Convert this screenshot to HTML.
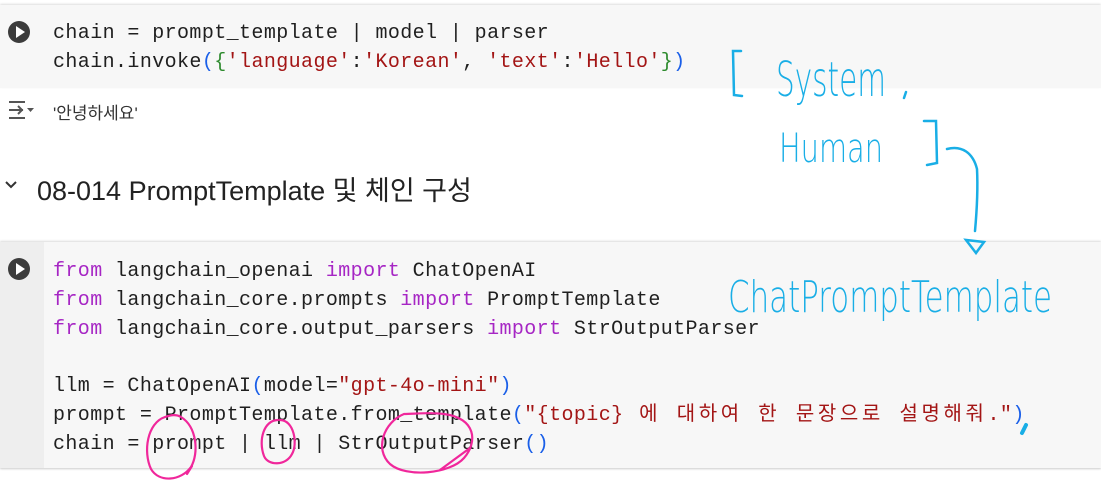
<!DOCTYPE html>
<html><head><meta charset="utf-8"><style>
body{margin:0;width:1101px;height:503px;background:#fff;position:relative;overflow:hidden;font-family:"Liberation Sans","Noto Sans CJK KR",sans-serif}
.cell{position:absolute;left:0;width:1101px;background:#f7f7f7}
.gut{position:absolute;left:0;top:0;bottom:0;width:44px;background:#eeeeee}
.code{position:absolute;left:53px;font-family:"Liberation Mono","Noto Sans CJK KR",monospace;font-size:20px;letter-spacing:0.4px;line-height:28.8px;color:#1f1f1f;white-space:pre}
.k{color:#a626c4}.s{color:#a31515}.b{color:#1a5fe8}.g{color:#2e8b2e}
.kr{letter-spacing:3.6px}
.run{position:absolute;left:8px;width:22px;height:22px;border-radius:50%;background:#3c3c3c}
.run:after{content:"";position:absolute;left:8px;top:5px;border-left:9px solid #fff;border-top:6px solid transparent;border-bottom:6px solid transparent}
</style></head><body>
<div class="cell" style="top:5px;height:83px;box-shadow:0 -1px 2px #ddd"></div>
<div class="run" style="top:21px"></div>
<div class="code" style="top:20px">chain = prompt_template | model | parser
chain.invoke<span class="b">(</span><span class="g">{</span><span class="s">'language'</span>:<span class="s">'Korean'</span>, <span class="s">'text'</span>:<span class="s">'Hello'</span><span class="g">}</span><span class="b">)</span></div>

<svg style="position:absolute;left:7px;top:99px" width="28" height="22" viewBox="0 0 28 22"><g stroke="#555" stroke-width="2" fill="none"><path d="M2 3h16M2 19h16M2 11h14M11 7l4 4-4 4"/></g><path d="M20 9h7l-3.5 4z" fill="#555"/></svg>
<div style="position:absolute;left:53px;top:99px;font-size:17px;color:#333;font-family:'Liberation Sans','Noto Sans CJK KR',sans-serif">'안녕하세요'</div>

<svg style="position:absolute;left:4px;top:179px" width="16" height="12"><path d="M2 3l5 5 5-5" stroke="#333" stroke-width="2" fill="none"/></svg>
<div style="position:absolute;left:37px;top:169px;font-size:27px;color:#222">08-014 PromptTemplate 및 체인 구성</div>

<div class="cell" style="top:242px;height:226px;box-shadow:0 1px 2px #ccc,0 -1px 2px #ddd"><div class="gut"></div></div>
<div class="run" style="top:258px"></div>
<div class="code" style="top:258px"><span class="k">from</span> langchain_openai <span class="k">import</span> ChatOpenAI
<span class="k">from</span> langchain_core.prompts <span class="k">import</span> PromptTemplate
<span class="k">from</span> langchain_core.output_parsers <span class="k">import</span> StrOutputParser

llm = ChatOpenAI<span class="b">(</span>model=<span class="s">"gpt-4o-mini"</span><span class="b">)</span>
prompt = PromptTemplate.from_template<span class="b">(</span><span class="s">"{topic}<span class="kr"> 에 대하여 한 문장으로 설명해줘</span>."</span><span class="b">)</span>
chain = prompt | llm | StrOutputParser<span class="b">()</span></div>

<svg style="position:absolute;left:0;top:0" width="1101" height="503">
<g fill="none" stroke="#19aee6" stroke-width="2.5" stroke-linecap="round">
<path d="M741 51l-8 0 1 44 8 1"/>
<path d="M906 92l-2 6"/>
<path d="M924 121l12 0 1 42-10 2"/>
<path d="M947 149c15 -4 26 4 30 20 1 20 0 40-2 62"/>
<path d="M966 240l10 13 8-11z"/>
<path d="M1022 433l4-8" stroke-width="4"/>
</g>
<g fill="#19aee6" font-family="DejaVu Sans,sans-serif" font-weight="200">
<text x="776" y="96" font-size="44" textLength="110" lengthAdjust="spacingAndGlyphs" transform="translate(776 96) scale(1 1.1) translate(-776 -96)">System</text>
<text x="779" y="162" font-size="40" textLength="104" lengthAdjust="spacingAndGlyphs">Human</text>
<text x="728" y="312" font-size="44" textLength="324" lengthAdjust="spacingAndGlyphs">ChatPromptTemplate</text>
</g>
<g fill="none" stroke="#f0279b" stroke-width="2.2" stroke-linecap="round">
<path d="M165 417c-18 6-22 35-14 52 8 14 30 12 40-2 8-14 6-40-10-50-5-3-10-2-16 0M192 466l-5 8"/>
<path d="M278 420c-14 0-20 20-14 36 4 10 22 10 28-2 6-10 2-34-12-34"/>
<path d="M404 414c-20 8-30 35-14 50 16 14 60 10 74-6 14-16 12-40-20-44-14-2-30 0-40 0M470 448l-30 22"/>
</g>
</svg>
</body></html>
